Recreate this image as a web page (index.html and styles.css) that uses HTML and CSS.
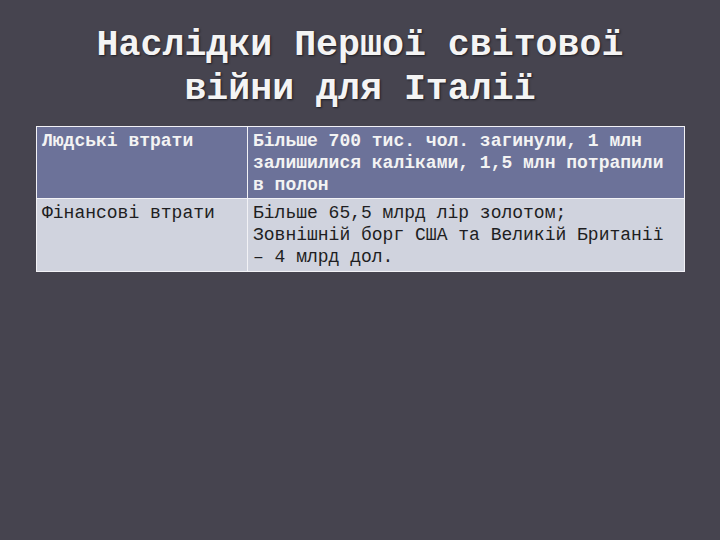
FILE: index.html
```html
<!DOCTYPE html>
<html lang="uk">
<head>
<meta charset="utf-8">
<link rel="stylesheet" href="styles.css">
</head>
<body>
<div class="slide">
  <h1 class="title">Наслідки Першої світової<br>війни для Італії</h1>
  <table class="facts">
    <tr class="head">
      <td class="c1">Людські втрати</td>
      <td class="c2">Більше 700 тис. чол. загинули, 1 млн залишилися каліками, 1,5 млн потрапили в полон</td>
    </tr>
    <tr class="body">
      <td class="c1">Фінансові втрати</td>
      <td class="c2">Більше 65,5 млрд лір золотом;<br>Зовнішній борг США та Великій Британії – 4 млрд дол.</td>
    </tr>
  </table>
</div>
</body>
</html>
```
FILE: styles.css
```css
html, body {
  margin: 0;
  padding: 0;
  background: #46444f;
}
.slide {
  width: 720px;
  height: 540px;
  padding-top: 24px;
  box-sizing: border-box;
}
.title {
  margin: 0 0 14px 0;
  font-family: "Courier New", "Liberation Mono", monospace;
  font-weight: bold;
  font-size: 36.6px;
  line-height: 44px;
  text-align: center;
  color: #f4f4f4;
  text-shadow: 1px 1px 2px #1e1d24;
}
.facts {
  margin-left: 36px;
  width: 649px;
  border-collapse: collapse;
  font-family: "Courier New", "Liberation Mono", monospace;
  font-size: 18px;
  line-height: 22px;
}
.facts td {
  border: 1px solid #f2f2f6;
  padding: 3px 5px 2px 5px;
  vertical-align: top;
}
.facts .c1 {
  width: 200px;
}
.head td {
  background: #6c7299;
  color: #f3f3f3;
  font-weight: bold;
  height: 66px;
}
.body td {
  background: #d0d3de;
  color: #1e1e22;
  height: 67px;
}
```
